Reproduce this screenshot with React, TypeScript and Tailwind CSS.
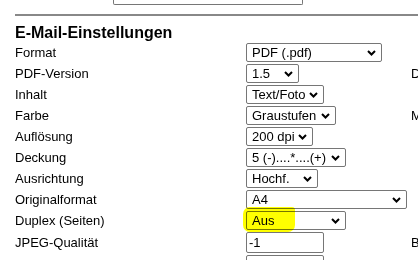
import { ReactNode } from 'react';

function Chevron() {
  return (
    <svg width="9" height="6" viewBox="0 0 9 6" className="absolute right-[5px] top-1/2 -translate-y-1/2">
      <path d="M1 1 L4.5 4.5 L8 1" fill="none" stroke="#000" strokeWidth="2" />
    </svg>
  );
}

function Sel({ value, className }: { value: string; className: string }) {
  return (
    <div
      className={`relative h-[19px] rounded-[2px] border border-[#767676] bg-white pl-[5px] text-[13px] leading-[17px] text-black ${className}`}
    >
      {value}
      <Chevron />
    </div>
  );
}

function Row({ label, children, side, tall }: { label: string; children: ReactNode; side?: string; tall?: boolean }) {
  return (
    <div className={`grid grid-cols-[231px_165px_auto] items-center ${tall ? 'h-[23px]' : 'h-[21px]'}`}>
      <div className="whitespace-nowrap">{label}</div>
      <div>{children}</div>
      <div className="whitespace-nowrap">{side}</div>
    </div>
  );
}

function Field({ value }: { value: string }) {
  return (
    <div className="h-[21px] w-[78px] rounded-[2px] border border-[#767676] bg-white pl-[2px] text-[13px] leading-[19px]">
      {value}
    </div>
  );
}

export default function App() {
  return (
    <div className="relative h-[260px] w-[418px] overflow-hidden bg-white text-[13px] text-black" style={{ fontFamily: '"Liberation Sans", Arial, sans-serif' }}>
      <div className="flex h-[5px]">
        <div className="ml-[113px] h-[5px] w-[190px] rounded-b-[2px] border-x border-b border-[#767676]" />
        <span className="ml-[27px] -mt-[16px] leading-[15px]">p</span>
        <span className="ml-[37px] -mt-[16px] leading-[15px]">p</span>
      </div>
      <div className="ml-[15px] mt-[9px] h-[2px] bg-[#888888]" />
      <div className="pl-[15px]">
        <h3 className="mt-[8px] h-[18px] text-[16px] font-bold leading-[18px]">E-Mail-Einstellungen</h3>
        <Row label="Format">
          <Sel value="PDF (.pdf)" className="w-[136px]" />
        </Row>
        <Row label="PDF-Version" side="Dateiname">
          <Sel value="1.5" className="w-[53px]" />
        </Row>
        <Row label="Inhalt">
          <Sel value="Text/Foto" className="w-[78px]" />
        </Row>
        <Row label="Farbe" side="Max. Größe">
          <Sel value="Graustufen" className="w-[90px]" />
        </Row>
        <Row label="Auflösung">
          <Sel value="200 dpi" className="w-[67px]" />
        </Row>
        <Row label="Deckung">
          <Sel value="5 (-)....*....(+)" className="w-[100px]" />
        </Row>
        <Row label="Ausrichtung">
          <Sel value="Hochf." className="w-[72px]" />
        </Row>
        <Row label="Originalformat">
          <Sel value="A4" className="w-[161px]" />
        </Row>
        <Row label="Duplex (Seiten)">
          <Sel value="Aus" className="w-[100px]" />
        </Row>
        <Row label="JPEG-Qualität" side="Betreff" tall>
          <Field value="-1" />
        </Row>
        <Row label="Dateiname" tall>
          <Field value="" />
        </Row>
      </div>
      <div className="pointer-events-none absolute left-[243px] top-[207px] h-[25px] w-[52px] rounded-[7px] rounded-tr-[3px] bg-[#ffff00] mix-blend-multiply" />
    </div>
  );
}
